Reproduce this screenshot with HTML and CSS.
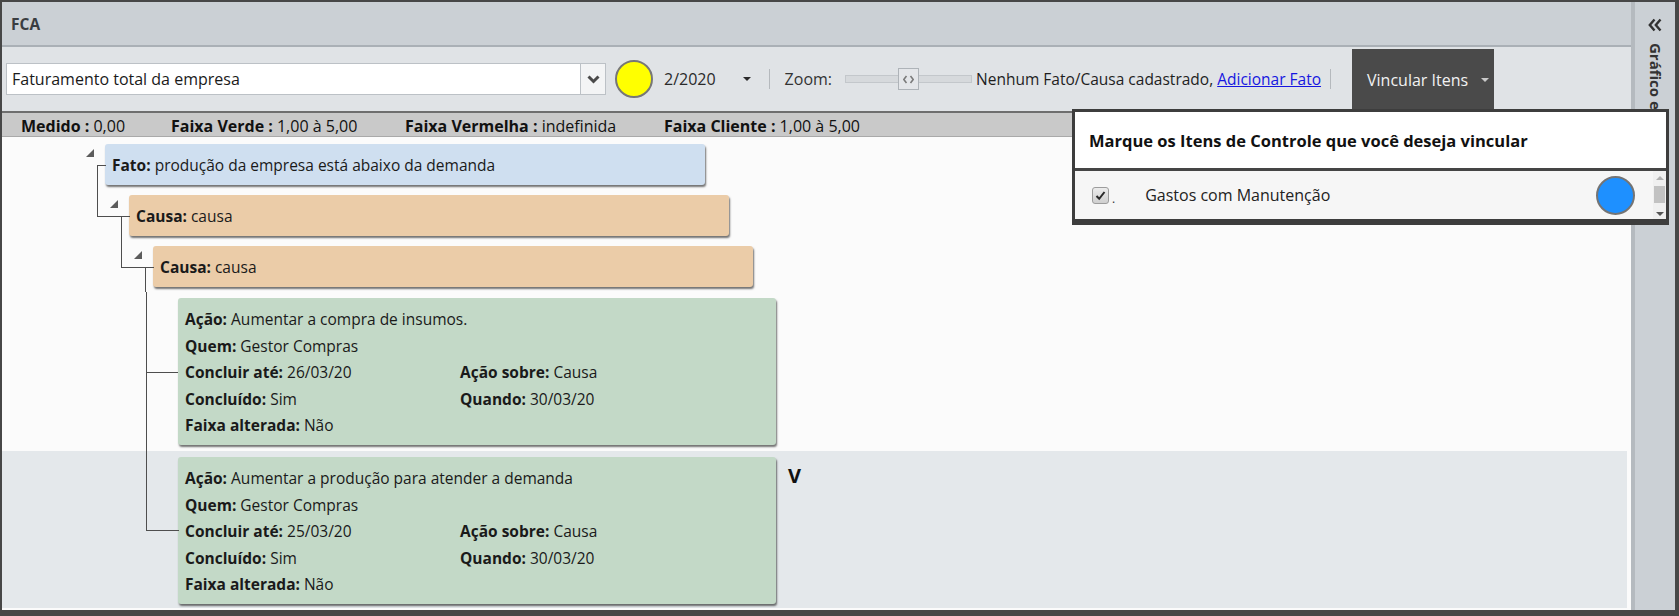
FILE: index.html
```html
<!DOCTYPE html>
<html lang="pt-BR">
<head>
<meta charset="utf-8">
<title>FCA</title>
<link rel="stylesheet" href="styles.css">
</head>
<body>
<div class="app">
  <main class="main">
    <header class="titlebar">FCA</header>
    <div class="toolbar">
      <div class="combo">
        <div class="combo-text">Faturamento total da empresa</div>
        <div class="combo-btn">
          <svg width="13" height="9" viewBox="0 0 13 9"><polyline points="1.5,1.5 6.5,6.5 11.5,1.5" fill="none" stroke="#4a4a4a" stroke-width="3"/></svg>
        </div>
      </div>
      <span class="status-dot"></span>
      <span class="period">2/2020</span>
      <span class="caret"></span>
      <span class="sep"></span>
      <span class="zoom-label">Zoom:</span>
      <div class="slider">
        <div class="track"></div>
        <span class="thumb">
          <svg width="11" height="9" viewBox="0 0 11 9"><polyline points="3.5,1 0.8,4.5 3.5,8" fill="none" stroke="#7a7a7a" stroke-width="1.6"/><polyline points="7.5,1 10.2,4.5 7.5,8" fill="none" stroke="#7a7a7a" stroke-width="1.6"/></svg>
        </span>
      </div>
      <span class="msg">Nenhum Fato/Causa cadastrado, <a class="link" href="#">Adicionar Fato</a></span>
      <span class="sep sep2"></span>
      <button class="link-btn" type="button">Vincular Itens <span class="caret light"></span></button>
    </div>
    <div class="stats">
      <span class="stat s1"><b>Medido :</b> 0,00</span>
      <span class="stat s2"><b>Faixa Verde :</b> 1,00 à 5,00</span>
      <span class="stat s3"><b>Faixa Vermelha :</b> indefinida</span>
      <span class="stat s4"><b>Faixa Cliente :</b> 1,00 à 5,00</span>
    </div>
    <div class="tree">
      <div class="row d0 parent">
        <span class="toggle"></span>
        <div class="card fato"><b>Fato:</b>&nbsp;produção da empresa está abaixo da demanda</div>
      </div>
      <div class="row d1 child parent">
        <span class="toggle"></span>
        <div class="card causa"><b>Causa:</b>&nbsp;causa</div>
      </div>
      <div class="row d2 child parent">
        <span class="toggle"></span>
        <div class="card causa"><b>Causa:</b>&nbsp;causa</div>
      </div>
      <div class="row d3 child more action-row">
        <div class="card acao">
          <div class="wide"><b>Ação:</b> Aumentar a compra de insumos.</div>
          <div class="wide"><b>Quem:</b> Gestor Compras</div>
          <div><b>Concluir até:</b> 26/03/20</div>
          <div><b>Ação sobre:</b> Causa</div>
          <div><b>Concluído:</b> Sim</div>
          <div><b>Quando:</b> 30/03/20</div>
          <div class="wide"><b>Faixa alterada:</b> Não</div>
        </div>
      </div>
      <div class="row d3 child action-row selected">
        <div class="card acao">
          <div class="wide"><b>Ação:</b> Aumentar a produção para atender a demanda</div>
          <div class="wide"><b>Quem:</b> Gestor Compras</div>
          <div><b>Concluir até:</b> 25/03/20</div>
          <div><b>Ação sobre:</b> Causa</div>
          <div><b>Concluído:</b> Sim</div>
          <div><b>Quando:</b> 30/03/20</div>
          <div class="wide"><b>Faixa alterada:</b> Não</div>
        </div>
        <span class="mark">V</span>
      </div>
    </div>
  </main>
  <aside class="side">
    <span class="collapse">
      <svg width="14" height="14" viewBox="0 0 14 14"><polyline points="6.5,1.5 1.8,7 6.5,12.5" fill="none" stroke="#303030" stroke-width="2.4"/><polyline points="12.5,1.5 7.8,7 12.5,12.5" fill="none" stroke="#303030" stroke-width="2.4"/></svg>
    </span>
    <span class="side-title">Gráfico e Tabela</span>
  </aside>
  <div class="popup">
    <div class="popup-title">Marque os Itens de Controle que você deseja vincular</div>
    <div class="popup-list">
      <div class="item">
        <span class="check">
          <svg width="13" height="13" viewBox="0 0 13 13"><polyline points="2.5,7 5.2,9.8 10.5,3" fill="none" stroke="#2a2a2a" stroke-width="2"/></svg>
        </span>
        <span class="dot">.</span>
        <span class="item-label">Gastos com Manutenção</span>
        <span class="item-status"></span>
      </div>
      <div class="scrollbar">
        <span class="sb-up"></span>
        <span class="sb-thumb"></span>
        <span class="sb-down"></span>
      </div>
    </div>
  </div>
</div>
</body>
</html>
```
FILE: styles.css
```css
* { box-sizing: border-box; }
html, body { margin: 0; padding: 0; }
body {
  font-family: "Open Sans", "Noto Sans", "DejaVu Sans", sans-serif;
  color: #1e1e1e;
  background: #fff;
}
.app {
  position: relative;
  width: 1679px;
  height: 616px;
  border-style: solid;
  border-color: #474747;
  border-width: 2px 4px 6px 2px;
  display: grid;
  grid-template-columns: 1fr 44px;
  overflow: hidden;
}
.main {
  display: flex;
  flex-direction: column;
  min-width: 0;
  background: #fbfbfb;
}
.titlebar {
  height: 45px;
  flex: none;
  background: #cbd0d5;
  border-bottom: 2px solid #aab0b6;
  padding-left: 9px;
  display: flex;
  align-items: center;
  font-size: 15.5px;
  font-weight: 700;
  color: #3a3d41;
}
.toolbar {
  height: 64px;
  flex: none;
  background: #e0e3e6;
  display: flex;
  align-items: center;
  padding-left: 4px;
  font-size: 15px;
  color: #2a2a2a;
}
.combo { display: flex; height: 32px; }
.combo-text {
  width: 575px;
  background: #fff;
  border: 1px solid #bcc1c6;
  padding-left: 5px;
  display: flex;
  align-items: center;
  font-size: 16px;
  color: #1a1a1a;
}
.combo-btn {
  width: 25px;
  background: #f3f4f5;
  border: 1px solid #bcc1c6;
  border-left: none;
  display: flex;
  align-items: center;
  justify-content: center;
}
.status-dot {
  margin-left: 9px;
  width: 38px;
  height: 38px;
  border-radius: 50%;
  background: #ffff00;
  border: 2px solid #777;
}
.period { margin-left: 11px; font-size: 16px; }
.caret {
  margin-left: 27px;
  width: 0;
  height: 0;
  border-left: 4px solid transparent;
  border-right: 4px solid transparent;
  border-top: 4px solid #2a2a2a;
}
.caret.light { margin-left: 13px; border-top-color: #c9c9c9; }
.sep {
  margin-left: 18px;
  width: 1px;
  height: 20px;
  background: #b5b9bd;
}
.sep2 { margin-left: 9px; }
.zoom-label { margin-left: 15px; font-size: 16px; color: #333; }
.slider {
  position: relative;
  margin-left: 13px;
  width: 127px;
  height: 22px;
  display: flex;
  align-items: center;
}
.track {
  width: 100%;
  height: 8px;
  background: #d6d9dc;
  border: 1px solid #c3c7cb;
}
.thumb {
  position: absolute;
  left: 53px;
  top: 0;
  width: 21px;
  height: 22px;
  background: #e4e6e9;
  border: 1px solid #aeb3b8;
  display: flex;
  align-items: center;
  justify-content: center;
}
.msg { margin-left: 4px; font-size: 15.5px; color: #1e1e1e; }
.link { color: #1616e0; text-decoration: underline; }
.link-btn {
  margin-left: 21px;
  align-self: flex-end;
  height: 62px;
  width: 142px;
  background: #4a4a4a;
  color: #f2f2f2;
  border: none;
  padding: 0 0 0 15px;
  display: flex;
  align-items: center;
  font-family: inherit;
  font-size: 16px;
}
.stats {
  height: 26px;
  flex: none;
  background: #c9c9c9;
  border-top: 2px solid #6e6e6e;
  border-bottom: 1px solid #a9a9a9;
  display: flex;
  align-items: center;
  padding: 2px 0 0 19px;
  font-size: 16px;
  color: #111;
}
.stat b { font-weight: 700; }
.s1 { width: 150px; }
.s2 { width: 234px; }
.s3 { width: 259px; }
.tree {
  flex: 1;
  padding-top: 2px;
  margin-right: 4px;
  font-size: 15.5px;
  color: #1a1a1a;
}
.row {
  position: relative;
  display: flex;
  align-items: flex-start;
  padding: 5px 0 5px var(--x);
}
.d0 { --x: 103px; }
.d1 { --x: 127px; }
.d2 { --x: 151px; }
.d3 { --x: 176px; }
.action-row { padding-top: 6px; padding-bottom: 6px; }
.selected { background: #e4e8eb; padding-bottom: 4px; }
.toggle {
  margin: 5px 11px 0 -19px;
  width: 0;
  height: 0;
  border-left: 8px solid transparent;
  border-bottom: 8px solid #5c5c5c;
}
.parent::after {
  content: "";
  position: absolute;
  left: calc(var(--x) - 8px);
  width: 8px;
  top: 50%;
  bottom: 0;
  border-left: 1px solid #4e4e4e;
  border-top: 1px solid #4e4e4e;
}
.child::before {
  content: "";
  position: absolute;
  left: calc(var(--x) - 32px);
  width: 32px;
  top: 0;
  height: 50%;
  border-left: 1px solid #4e4e4e;
  border-bottom: 1px solid #4e4e4e;
}
.child.more::before { height: 100%; border-bottom: none; }
.more::after {
  content: "";
  position: absolute;
  left: calc(var(--x) - 32px);
  width: 32px;
  top: 50%;
  border-top: 1px solid #4e4e4e;
}
.card {
  width: 600px;
  height: 41px;
  border-radius: 3px;
  box-shadow: 1px 2px 2px rgba(0, 0, 0, 0.55);
  padding: 0 7px;
  display: flex;
  align-items: center;
}
.fato { background: #cfdff0; }
.causa { background: #ebcca8; }
.acao {
  width: 598px;
  height: 147px;
  background: #c3d9c7;
  display: grid;
  grid-template-columns: 275px 1fr;
  grid-auto-rows: 26.5px;
  align-items: center;
  align-content: start;
  padding: 8px 7px 0;
}
.acao .wide { grid-column: 1 / -1; }
.mark {
  margin: 9px 0 0 12px;
  font-size: 20px;
  font-weight: 700;
  line-height: 1;
  color: #111;
}
.side {
  background: #cbd0d5;
  border-left: 4px solid #b5babf;
  display: flex;
  flex-direction: column;
  align-items: center;
  padding-top: 16px;
  color: #333;
}
.collapse { display: flex; height: 14px; }
.side-title {
  margin-top: 11px;
  writing-mode: vertical-rl;
  font-size: 15px;
  font-weight: 700;
  line-height: 1;
}
.popup {
  position: absolute;
  left: 1070px;
  top: 107px;
  width: 597px;
  background: #fff;
  border: 3px solid #3d3d3d;
  border-bottom-width: 6px;
}
.popup-title {
  height: 59px;
  border-bottom: 3px solid #454545;
  padding-left: 14px;
  display: flex;
  align-items: center;
  font-size: 16.5px;
  font-weight: 700;
  color: #111;
}
.popup-list { display: flex; height: 48px; background: #f6f6f6; }
.item { flex: 1; display: flex; align-items: center; padding-left: 17px; }
.check {
  width: 17px;
  height: 17px;
  border: 1px solid #9c9c9c;
  border-radius: 3px;
  background: linear-gradient(#ececec, #cfcfcf);
  display: flex;
  align-items: center;
  justify-content: center;
}
.dot { margin: 6px 0 0 3px; font-size: 12px; color: #333; }
.item-label { margin-left: 30px; font-size: 16px; color: #222; }
.item-status {
  margin-left: auto;
  margin-right: 18px;
  width: 39px;
  height: 39px;
  border-radius: 50%;
  background: #1e90ff;
  border: 2px solid #747474;
}
.scrollbar {
  width: 13px;
  background: #f0f0f0;
  display: flex;
  flex-direction: column;
  align-items: center;
  padding: 5px 0 3px;
}
.sb-up {
  width: 0; height: 0;
  border-left: 4px solid transparent;
  border-right: 4px solid transparent;
  border-bottom: 4px solid #b0b0b0;
}
.sb-thumb { margin-top: 6px; width: 11px; height: 17px; background: #c2c2c2; }
.sb-down {
  margin-top: auto;
  width: 0; height: 0;
  border-left: 4px solid transparent;
  border-right: 4px solid transparent;
  border-top: 4px solid #555;
}
```
